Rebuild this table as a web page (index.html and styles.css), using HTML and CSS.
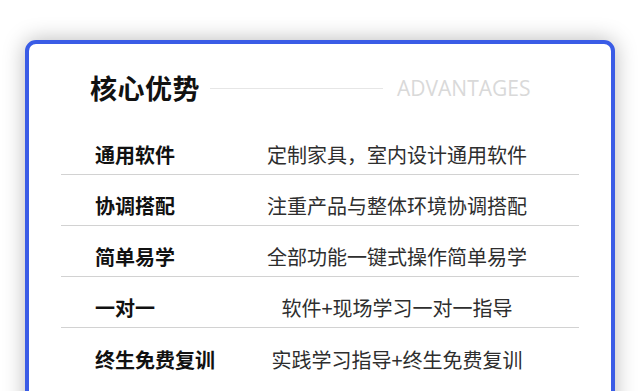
FILE: index.html
```html
<!DOCTYPE html>
<html lang="zh-CN">
<head>
<meta charset="utf-8">
<title>核心优势</title>
<link rel="stylesheet" href="styles.css">
</head>
<body>
<div class="card">
  <div class="header">
    <h2 class="title">核心优势</h2>
    <span class="rule"></span>
    <span class="en">ADVANTAGES</span>
  </div>
  <ul class="list">
    <li class="row"><span class="label">通用软件</span><span class="value">定制家具，室内设计通用软件</span></li>
    <li class="row"><span class="label">协调搭配</span><span class="value">注重产品与整体环境协调搭配</span></li>
    <li class="row"><span class="label">简单易学</span><span class="value">全部功能一键式操作简单易学</span></li>
    <li class="row"><span class="label">一对一</span><span class="value">软件+现场学习一对一指导</span></li>
    <li class="row"><span class="label">终生免费复训</span><span class="value">实践学习指导+终生免费复训</span></li>
  </ul>
</div>
</body>
</html>
```

FILE: styles.css
```css
* { box-sizing: border-box; }
html, body { margin: 0; padding: 0; background: #fff; overflow: hidden; }
body {
  padding: 40px 0 0 25px;
  font-family: "Noto Sans CJK SC", "Noto Sans", sans-serif;
  height: 391px;
}
.card {
  width: 590px;
  height: 420px;
  border: 4px solid #3a5ce6;
  border-radius: 11px;
  background: #fff;
  box-shadow: 0 0 22px rgba(0, 0, 0, 0.28);
  padding: 30px 32px 0 32px;
}
.header {
  display: flex;
  align-items: center;
  height: 28px;
  padding-left: 29px;
}
.title {
  margin: 0;
  font-size: 27px;
  line-height: 28px;
  font-weight: 700;
  color: #111;
  letter-spacing: 0.5px;
}
.rule {
  width: 173px;
  height: 1px;
  background: #e6e6e6;
  margin: 0 14px 0 10px;
}
.en {
  font-family: "Open Sans", sans-serif;
  font-size: 21px;
  color: #d9d9d9;
  line-height: 28px;
}
.list {
  list-style: none;
  margin: 22px 0 0 0;
  padding: 0;
}
.row {
  display: flex;
  align-items: center;
  height: 51px;
  padding-top: 12px;
  border-bottom: 1px solid #d2d2d2;
  font-size: 20px;
  line-height: 24px;
}
.row:last-child { border-bottom: none; }
.label {
  width: 200px;
  padding-left: 34px;
  font-weight: 700;
  color: #111;
}
.value {
  flex: 1;
  text-align: center;
  color: #2e2e2e;
  padding-right: 46px;
}
```
